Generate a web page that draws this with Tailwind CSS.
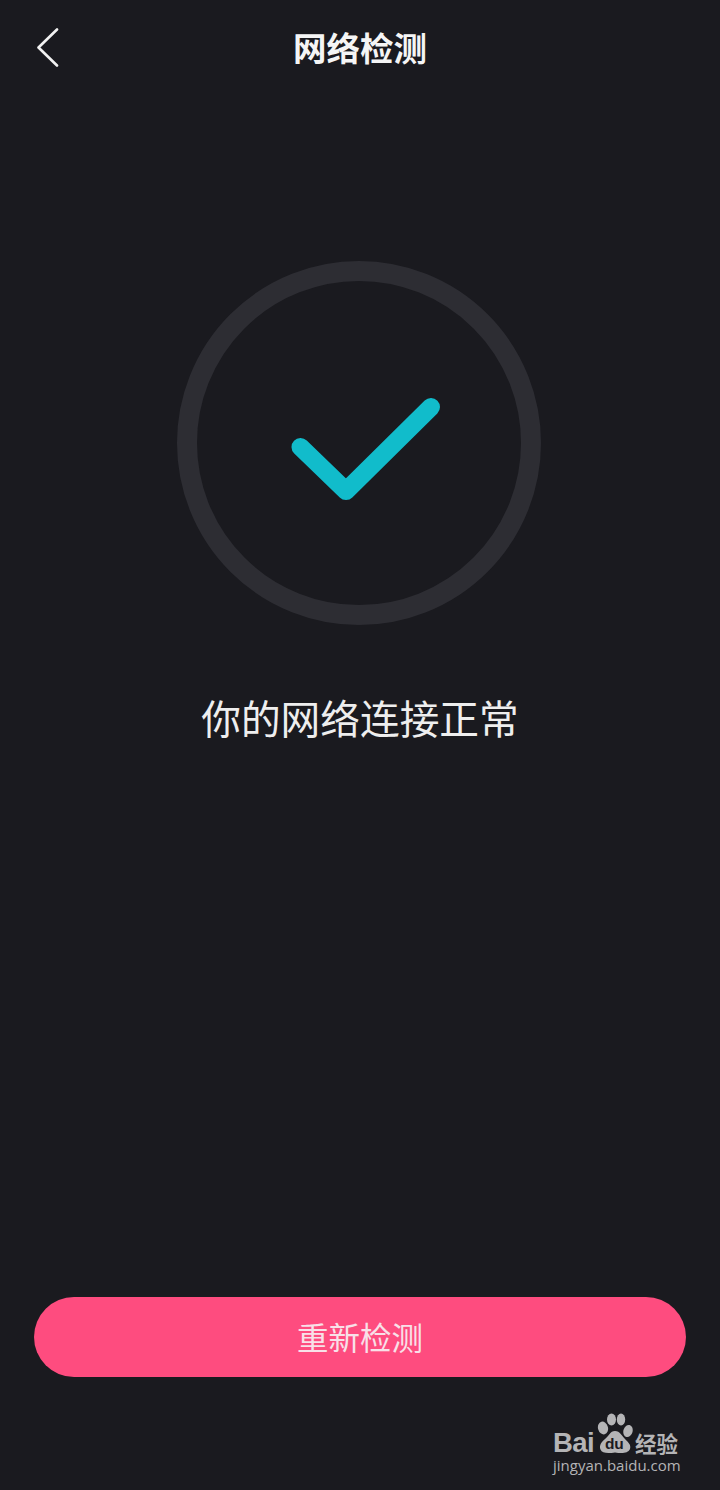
<!DOCTYPE html>
<html lang="zh">
<head>
<meta charset="utf-8">
<script src="https://cdn.jsdelivr.net/npm/@tailwindcss/browser@4"></script>
</head>
<body class="bg-[#1a1a1f]">
<div class="relative flex h-[1490px] w-[720px] flex-col overflow-hidden bg-[#1a1a1f] font-['Noto_Sans_CJK_SC','Noto_Sans',sans-serif] text-white">
  <header class="relative flex h-[94px] shrink-0 items-center justify-center">
    <svg class="absolute left-[36px] top-[27px]" width="24" height="40" viewBox="0 0 24 40" fill="none">
      <path d="M21 2.5 L2.5 20.5 L21 38.5" stroke="#f2f2f2" stroke-width="2.6" stroke-linecap="round" stroke-linejoin="round"/>
    </svg>
    <h1 class="text-[33.5px] leading-none font-bold text-[#f5f5f5]">网络检测</h1>
  </header>

  <main class="flex flex-1 flex-col items-center">
    <div class="mt-[167px] ml-[-2px] flex h-[364px] w-[364px] items-center justify-center rounded-full border-[20px] border-[#2d2d33]">
      <svg width="150" height="104" viewBox="0 0 150 104" fill="none" class="translate-x-[7px] translate-y-[6px]">
        <path d="M9.5 50 L55 94 L140 10" stroke="#11bccb" stroke-width="18" stroke-linecap="round" stroke-linejoin="round"/>
      </svg>
    </div>
    <p class="mt-[64px] text-[39.7px] leading-[56px] font-normal text-[#eeeeee]">你的网络连接正常</p>
  </main>

  <div class="px-[34px] pb-[113px]">
    <button class="flex h-[80px] w-full items-center justify-center rounded-full bg-[#fe4c7f] text-[31.5px] text-[#f8e0e8]">重新检测</button>
  </div>

  <div class="absolute left-[553px] top-[1412px] h-[62px] w-[130px] text-[#b4b4b6]">
    <span class="absolute left-0 top-[15px] font-['Liberation_Sans',sans-serif] text-[27.5px] leading-[32px] font-bold tracking-[-0.6px]">Bai</span>
    <svg class="absolute left-[44px] top-0" width="37" height="44" viewBox="0 0 37 44" fill="#b4b4b6">
      <ellipse cx="6" cy="16" rx="5" ry="6.5" transform="rotate(-15 6 16)"/>
      <ellipse cx="14.5" cy="7.5" rx="4.5" ry="6"/>
      <ellipse cx="24" cy="7.5" rx="4.2" ry="6"/>
      <ellipse cx="31" cy="19" rx="4.6" ry="6.2" transform="rotate(15 31 19)"/>
      <path d="M18 19 C13 19 12 24 8 27 C4 30 2 34 3.5 37.5 C5 41.5 11 41.5 18 40.5 C25 41.5 31 41.5 33 37 C34.5 33 31 30 28 27 C25 24 23 19 18 19 Z"/>
    </svg>
    <span class="absolute left-[52px] top-[24px] font-['Liberation_Sans',sans-serif] text-[15.5px] leading-[16px] font-bold tracking-[-0.3px] text-[#1a1a1f]">du</span>
    <span class="absolute left-[82px] top-[18px] text-[21.5px] leading-[26px] font-bold">经验</span>
    <span class="absolute left-0 top-[43px] font-['Open_Sans',sans-serif] text-[15px] leading-[20px] whitespace-nowrap">jingyan.baidu.com</span>
  </div>
</div>
</body>
</html>
